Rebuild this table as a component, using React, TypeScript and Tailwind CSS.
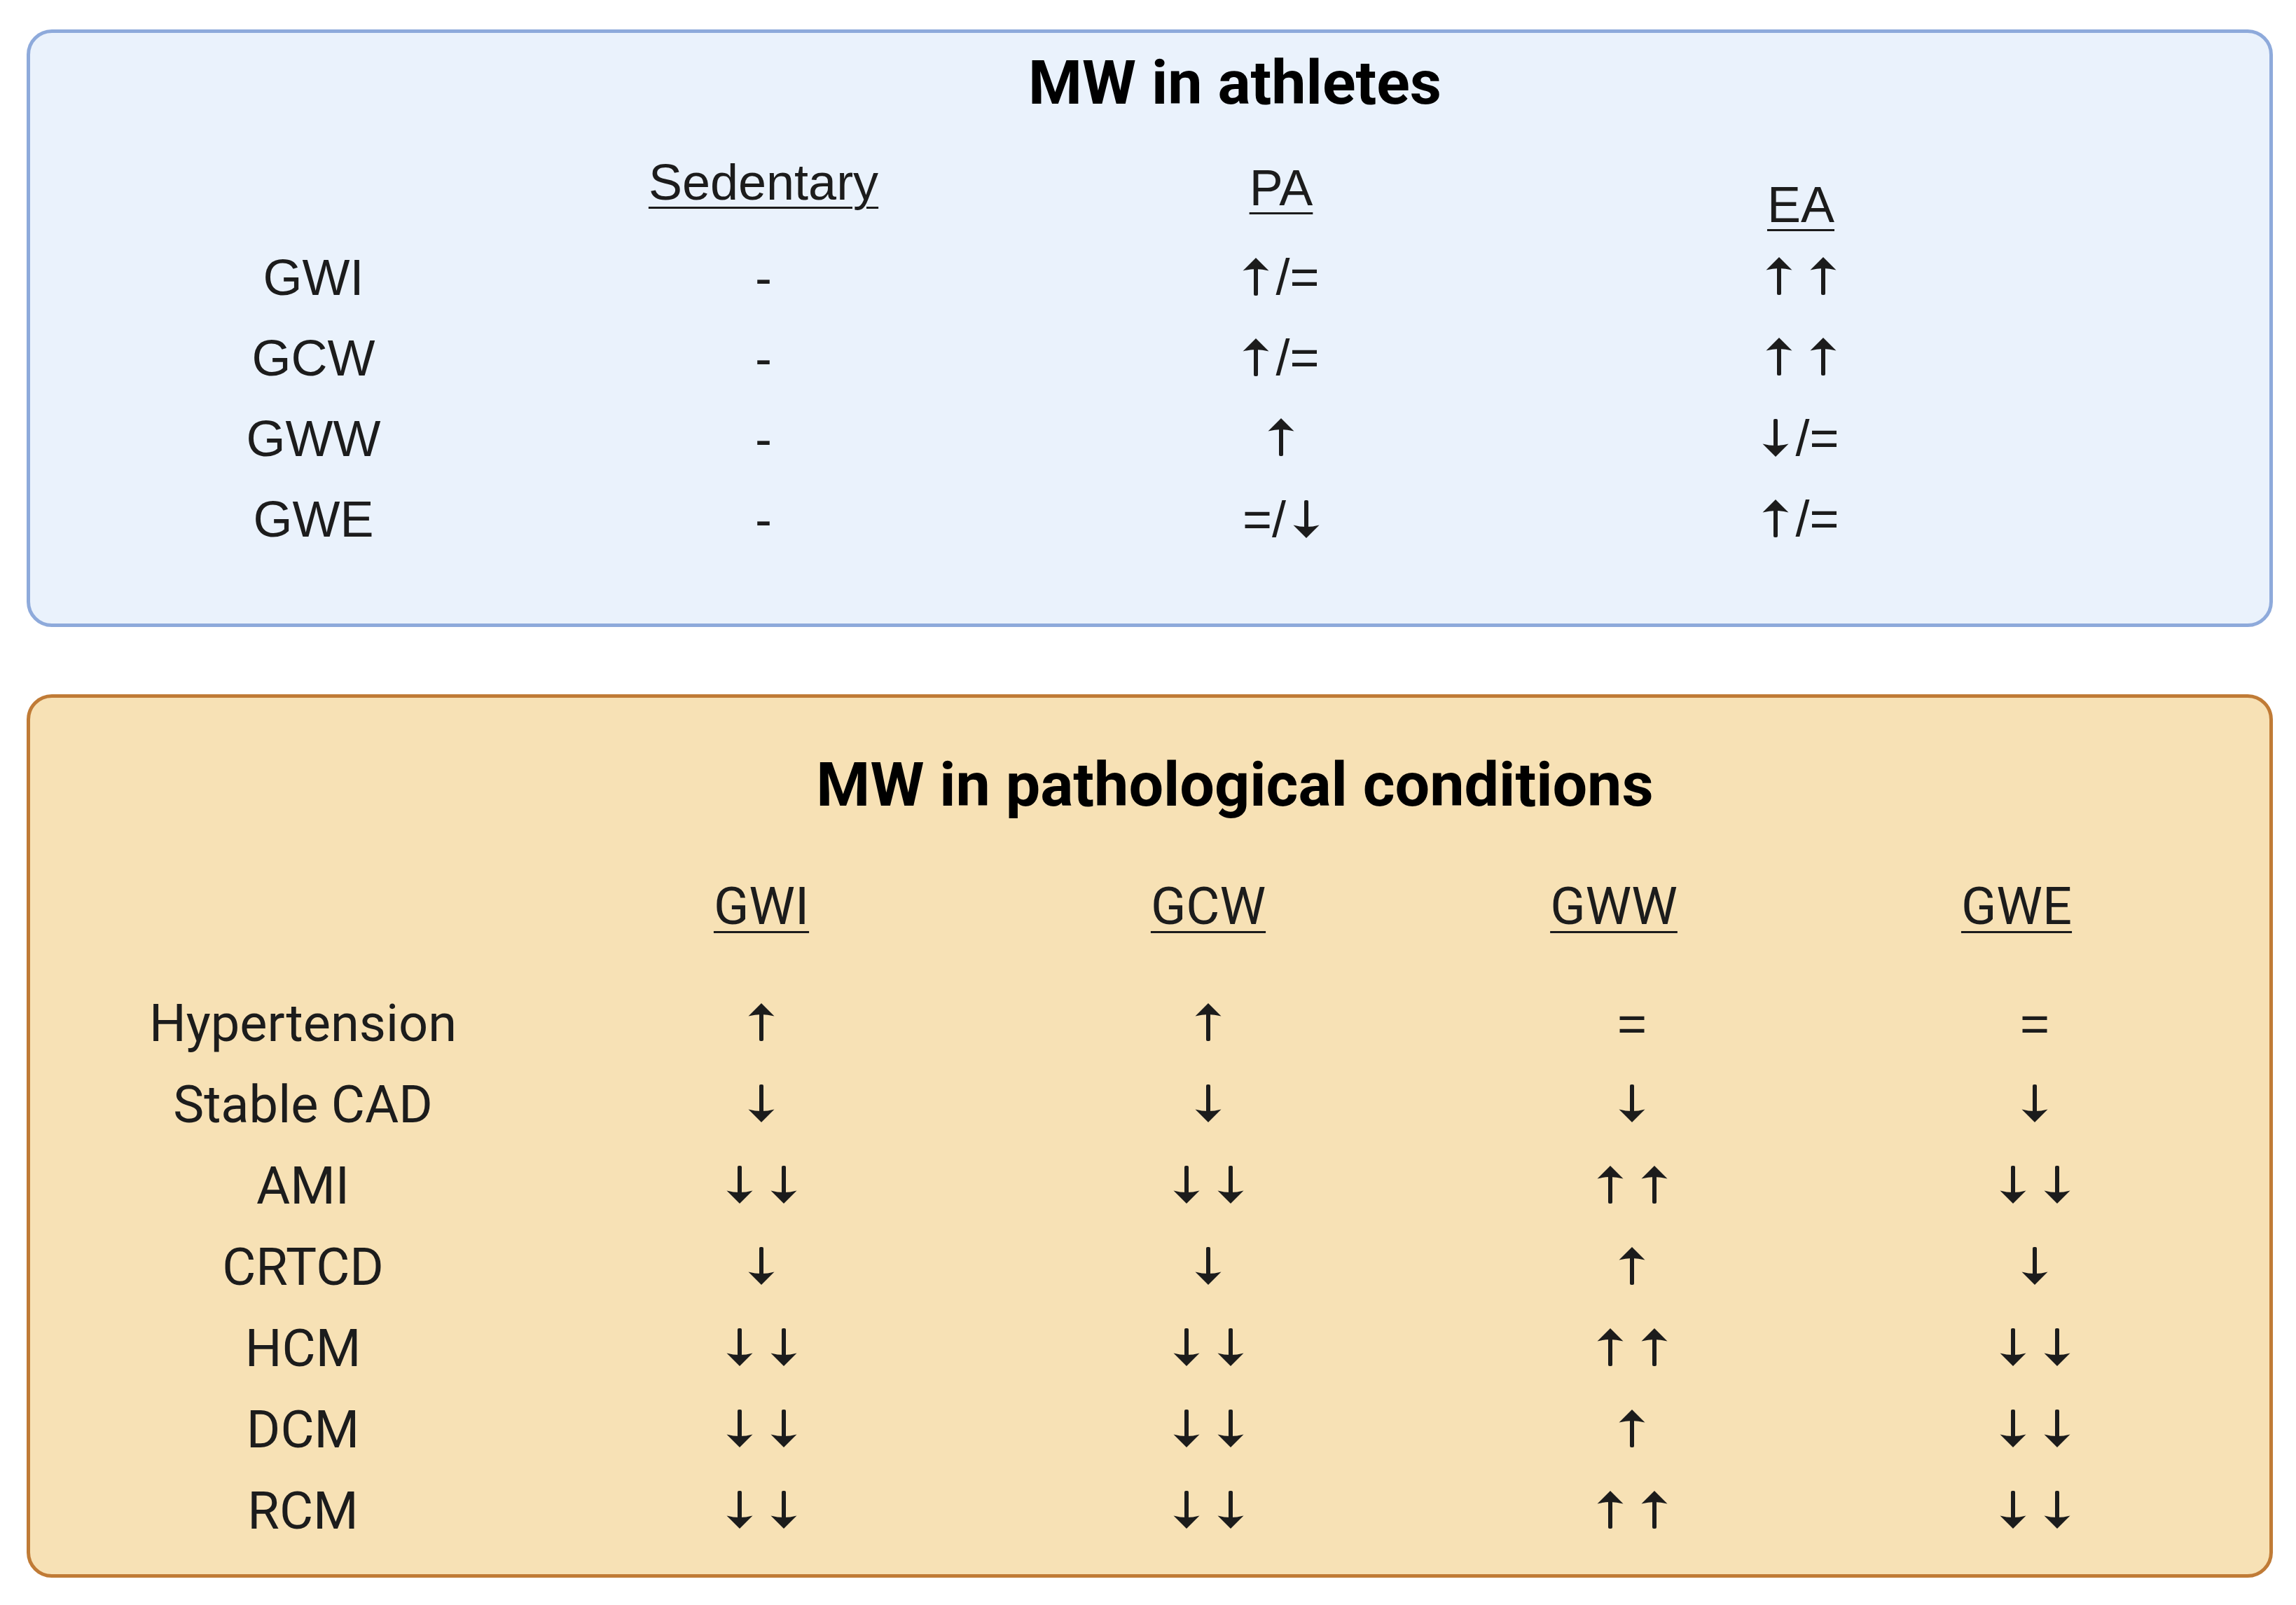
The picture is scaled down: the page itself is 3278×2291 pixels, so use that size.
import React from 'react';

// Summary of myocardial work (MW) indices in athletes and in disease
const athleteRows = [
  { label: 'GWI', sedentary: '-', pa: '↑/=', ea: '↑↑' },
  { label: 'GCW', sedentary: '-', pa: '↑/=', ea: '↑↑' },
  { label: 'GWW', sedentary: '-', pa: '↑', ea: '↓/=' },
  { label: 'GWE', sedentary: '-', pa: '=/↓', ea: '↑/=' },
];

const conditionRows = [
  { label: 'Hypertension', gwi: '↑', gcw: '↑', gww: '=', gwe: '=' },
  { label: 'Stable CAD', gwi: '↓', gcw: '↓', gww: '↓', gwe: '↓' },
  { label: 'AMI', gwi: '↓↓', gcw: '↓↓', gww: '↑↑', gwe: '↓↓' },
  { label: 'CRTCD', gwi: '↓', gcw: '↓', gww: '↑', gwe: '↓' },
  { label: 'HCM', gwi: '↓↓', gcw: '↓↓', gww: '↑↑', gwe: '↓↓' },
  { label: 'DCM', gwi: '↓↓', gcw: '↓↓', gww: '↑', gwe: '↓↓' },
  { label: 'RCM', gwi: '↓↓', gcw: '↓↓', gww: '↑↑', gwe: '↓↓' },
];

const arial = "font-['Liberation_Sans',Arial,sans-serif]";
const roboto = "font-['Roboto','Liberation_Sans',sans-serif]";

// Arrow glyph drawn as svg so it matches the heavier arrows of the figure
const Arrow: React.FC<{ down?: boolean; className?: string }> = ({ down, className }) => (
  <svg
    viewBox="0 0 38 54"
    className={`h-[54px] w-[38px] shrink-0 ${down ? 'rotate-180' : ''} ${className ?? ''}`}
    fill="currentColor"
  >
    <path d="M19 0 L37.5 18.5 Q19 13.5 0.5 18.5 Z" />
    <rect x="16" y="10" width="6" height="44" rx="2" />
  </svg>
);

// Renders a cell value such as "↑/=" or "↓↓"
const Value: React.FC<{ text: string }> = ({ text }) => {
  const chars = Array.from(text);
  return (
    <span className="inline-flex items-center">
      {chars.map((c, i) => {
        const prev = chars[i - 1];
        if (c === '↑' || c === '↓') {
          const ml = prev === '↑' || prev === '↓' ? 'ml-[25px]' : prev ? 'ml-[10px]' : '';
          return <Arrow key={i} down={c === '↓'} className={ml} />;
        }
        const ml = prev === '↑' || prev === '↓' ? 'ml-[9px]' : '';
        return (
          <span key={i} className={ml}>
            {c}
          </span>
        );
      })}
    </span>
  );
};

const App: React.FC = () => {
  return (
    <div className="min-h-screen bg-white pt-[42px] pl-[38px] text-[#1c1c1c]">
      <div className="flex w-[3207px] flex-col gap-[96px]">
        {/* Athletes */}
        <section className="h-[853px] rounded-[36px] border-[5px] border-[#8eaadb] bg-[#eaf2fc]">
          <h2 className={`${roboto} pt-[27px] pl-[243px] text-center text-[88px] font-bold leading-none text-black`}>
            MW in athletes
          </h2>

          <div className={`${arial} mt-[62px] grid h-[114px] grid-cols-[809px_476px_1002px_482px] items-start text-[72px] leading-none`}>
            <div />
            <div className="text-center">
              <span className="underline decoration-[3px] underline-offset-[10px]">Sedentary</span>
            </div>
            <div className="mt-[8px] text-center">
              <span className="underline decoration-[3px] underline-offset-[10px]">PA</span>
            </div>
            <div className="mt-[32px] text-center">
              <span className="underline decoration-[3px] underline-offset-[10px]">EA</span>
            </div>
          </div>

          <div className={`${arial} grid grid-cols-[809px_476px_1002px_482px] auto-rows-[115px] items-center text-[72px] leading-none`}>
            {athleteRows.map((row) => (
              <React.Fragment key={row.label}>
                <div className="text-center">{row.label}</div>
                <div className="text-center">{row.sedentary}</div>
                <div className="text-center">
                  <Value text={row.pa} />
                </div>
                <div className="text-center">
                  <Value text={row.ea} />
                </div>
              </React.Fragment>
            ))}
          </div>
        </section>

        {/* Pathological conditions */}
        <section className="h-[1261px] rounded-[36px] border-[5px] border-[#c07b36] bg-[#f7e1b5]">
          <h2 className={`${roboto} pt-[80px] pl-[243px] text-center text-[88px] font-bold leading-none text-black`}>
            MW in pathological conditions
          </h2>

          <div className={`${roboto} mt-[93px] grid h-[146px] grid-cols-[779px_530px_746px_438px_699px] items-start text-[74px] leading-none`}>
            <div />
            <div className="text-center">
              <span className="underline decoration-[3px] underline-offset-[10px]">GWI</span>
            </div>
            <div className="text-center">
              <span className="underline decoration-[3px] underline-offset-[10px]">GCW</span>
            </div>
            <div className="pr-[26px] text-center">
              <span className="underline decoration-[3px] underline-offset-[10px]">GWW</span>
            </div>
            <div className="pr-[13px] text-center">
              <span className="underline decoration-[3px] underline-offset-[10px]">GWE</span>
            </div>
          </div>

          <div className="grid grid-cols-[779px_530px_746px_438px_699px] auto-rows-[116px] items-center leading-none">
            {conditionRows.map((row) => (
              <React.Fragment key={row.label}>
                <div className={`${roboto} text-center text-[74px]`}>{row.label}</div>
                <div className={`${arial} text-center text-[72px]`}>
                  <Value text={row.gwi} />
                </div>
                <div className={`${arial} text-center text-[72px]`}>
                  <Value text={row.gcw} />
                </div>
                <div className={`${arial} pl-[26px] text-center text-[72px]`}>
                  <Value text={row.gww} />
                </div>
                <div className={`${arial} pl-[39px] text-center text-[72px]`}>
                  <Value text={row.gwe} />
                </div>
              </React.Fragment>
            ))}
          </div>
        </section>
      </div>
    </div>
  );
};

export default App;
